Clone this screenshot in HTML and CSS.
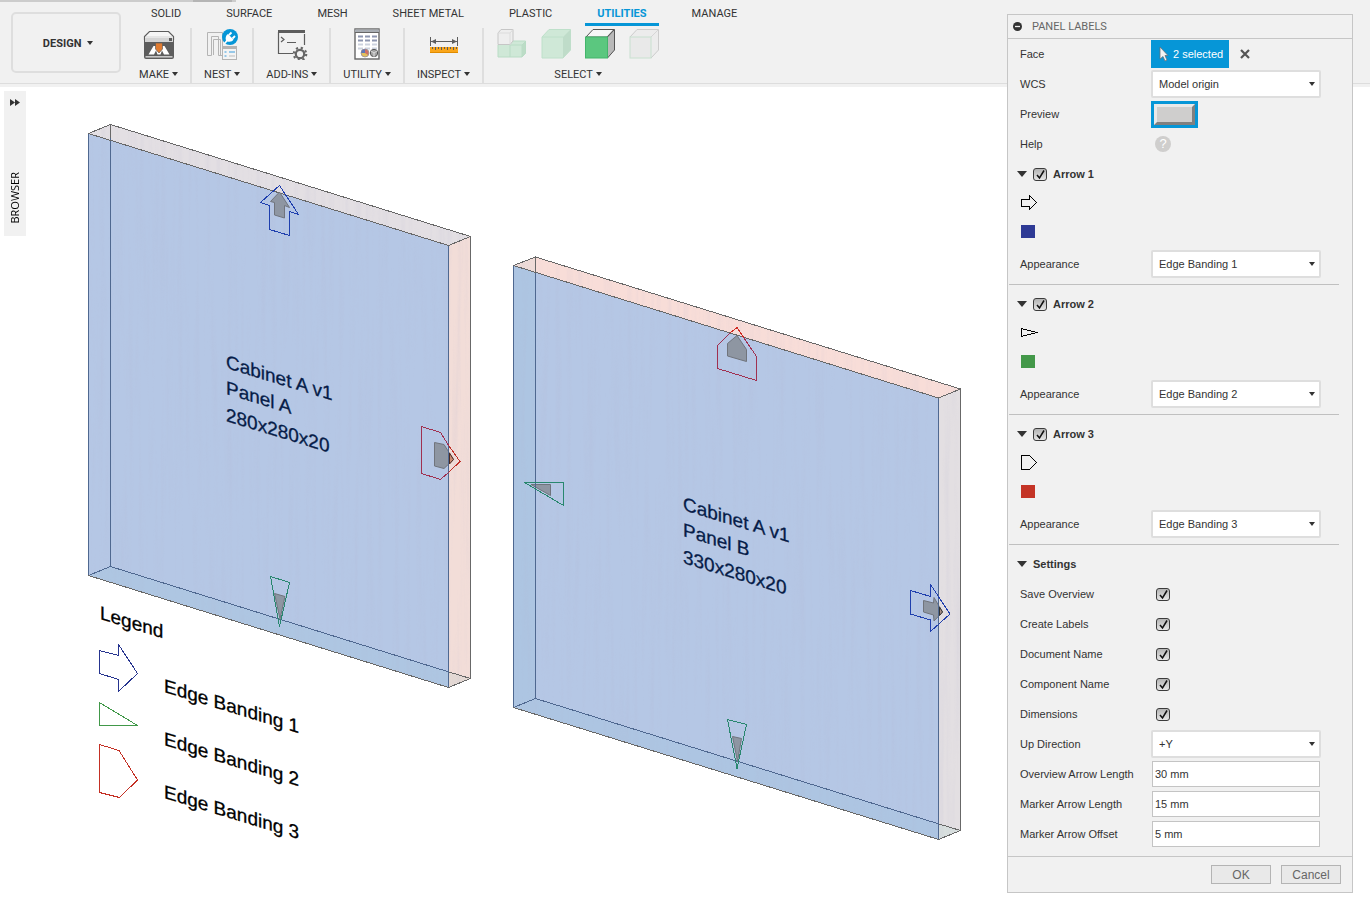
FILE: index.html
```html
<!DOCTYPE html>
<html lang="en">
<head>
<meta charset="utf-8">
<title>Panel Labels</title>
<link rel="stylesheet" href="styles.css">
</head>
<body>
<header class="toolbar">
  <div class="doc-strip"><span class="doc-strip-active"></span></div>
  <button class="workspace" type="button">DESIGN <span class="caret"></span></button>
  <div class="ribbon">
    <nav class="tabs">
      <a class="tab" href="#solid">SOLID</a>
      <a class="tab" href="#surface">SURFACE</a>
      <a class="tab" href="#mesh">MESH</a>
      <a class="tab" href="#sheet-metal">SHEET METAL</a>
      <a class="tab" href="#plastic">PLASTIC</a>
      <a class="tab tab-active" href="#utilities">UTILITIES</a>
      <a class="tab" href="#manage">MANAGE</a>
    </nav>
    <div class="groups">
      <div class="group">
        <svg class="icon" width="32" height="32" viewBox="0 0 32 32" aria-hidden="true">
          <path d="M1.500 12V8.500L6.500 3.500H25.500L30.500 8.500V12" fill="#f6f6f6" stroke="#5d5d5d" stroke-width="1.200"/>
          <path d="M3 9h26" stroke="#d6d6d6"/>
          <rect x="1" y="10" width="30" height="21" rx="2" fill="#5d5d5d"/>
          <rect x="2" y="10" width="28" height="4" fill="#d4d4d4"/><rect x="26" y="10" width="3" height="3" fill="#5d5d5d"/>
          <rect x="2.500" y="28" width="27" height="1.600" fill="#c8c8c8"/>
          <path d="M5.500 26.500L10.500 18H21.500L26.500 26.500H21L19 22.500 17.500 26.500H14.500L13 22.500 11 26.500Z" fill="#fff"/>
          <path d="M12.500 15H19.500V21L16 25 12.500 21Z" fill="#e07b30" stroke="#5d5d5d" stroke-width=".7"/>
        </svg>
        <button class="group-name" type="button">MAKE<span class="caret"></span></button>
      </div>
      <div class="group">
        <svg class="icon" width="32" height="32" viewBox="0 0 32 32" aria-hidden="true">
          <path d="M1.500 27.500V4.500H16.500V27.500H12.500V8.500H5.500V27.500ZM7.500 27V11.500H14.500V27" fill="none" stroke="#b4b4b4"/>
          <rect x="16.500" y="18.500" width="14" height="13" fill="#f4f4f4" stroke="#b4b4b4"/>
          <path d="M16 19.500h15" stroke="#b4b4b4" stroke-width="3"/>
          <path d="M18.500 24h2M18.500 28h2M23 24h6" stroke="#78b9e4" stroke-width="1.500"/><path d="M23 28h6" stroke="#bbb"/>
          <circle cx="24" cy="9" r="8" fill="#0696d7"/>
          <path d="M17.500 15.500L20 12.500C19 10 20 7 22 6L27.500 11.500C26.500 13.500 24 14 21.500 13.500L19 16Z" fill="#fff"/>
          <path d="M23 7L25.500 4.500M26.500 10.500L29 8" stroke="#fff" stroke-width="1.800"/>
        </svg>
        <button class="group-name" type="button">NEST<span class="caret"></span></button>
      </div>
      <div class="group">
        <svg class="icon" width="32" height="32" viewBox="0 0 32 32" aria-hidden="true">
          <path d="M2.500 4V25.500H17M28.500 6V17" fill="none" stroke="#5d5d5d" stroke-width="1.200"/>
          <path d="M2 3.500H29" stroke="#5d5d5d" stroke-width="3"/>
          <path d="M5 9L8 11.500 5 14M11 14.500H20" fill="none" stroke="#5d5d5d" stroke-width="1.200"/>
          <circle cx="24" cy="26" r="4.200" fill="none" stroke="#666" stroke-width="2.200"/>
          <circle cx="24" cy="26" r="6.200" fill="none" stroke="#666" stroke-width="2.200" stroke-dasharray="2.200 2.670"/>
        </svg>
        <button class="group-name" type="button">ADD-INS<span class="caret"></span></button>
      </div>
      <div class="group">
        <svg class="icon" width="32" height="32" viewBox="0 0 32 32" aria-hidden="true">
          <rect x="4" y="1" width="24" height="30" fill="#fff" stroke="#666" stroke-width="1.400"/>
          <path d="M4 3h24" stroke="#a8adb3" stroke-width="3"/><path d="M4 4.500h24" stroke="#666"/>
          <path d="M7 8.500h5M14 8.500h5M21 8.500h5M7 12.500h5M14 12.500h5M21 12.500h5" stroke="#8d96b0" stroke-width="2"/>
          <path d="M7 16.500h5M14 16.500h5M21 16.500h5M7 20.500h5M14 20.500h5M21 20.500h5" stroke="#cdd3df" stroke-width="2"/>
          <circle cx="14" cy="25" r="4" fill="#e3c05c"/><path d="M14 25V21A4 4 0 0 0 10 25Z" fill="#5e78b8"/><path d="M14 25V21A4 4 0 0 1 17 27Z" fill="#cf6f67"/><circle cx="14" cy="25" r="4" fill="none" stroke="#8b84a0" stroke-width=".7"/>
          <circle cx="23" cy="25" r="3.700" fill="#a5a5a5" stroke="#555"/><path d="M20 23l3 2 3-2M23 25v4" fill="none" stroke="#ddd"/>
        </svg>
        <button class="group-name" type="button">UTILITY<span class="caret"></span></button>
      </div>
      <div class="group">
        <svg class="icon" width="32" height="32" viewBox="0 0 32 32" aria-hidden="true">
          <path d="M2.500 9V18M29.500 9V18M3 13.500H29" fill="none" stroke="#5d5d5d"/>
          <path d="M3 13.500L8 11V16ZM29 13.500L24 11V16Z" fill="#5d5d5d"/>
          <rect x="2" y="19" width="28" height="6" fill="#faa61a"/><path d="M2 24.500H30" stroke="#e08c00"/>
          <path d="M4.500 19v2M7.500 19v3M10.500 19v2M13.500 19v3M16.500 19v2M19.500 19v3M22.500 19v2M25.500 19v3M28.500 19v2" stroke="#5d5d5d"/>
        </svg>
        <button class="group-name" type="button">INSPECT<span class="caret"></span></button>
      </div>
      <div class="group group-select">
        <div class="icon-row">
          <svg class="icon" width="32" height="32" viewBox="0 0 32 32" aria-hidden="true">
            <path d="M2 17L6 13H29.500V25L26 29H2Z" fill="#cfe8d7" stroke="#b9dcc5"/><path d="M26 29V17L29.500 13.500V25ZM14 17V29" fill="#bcdcc6" stroke="#b9dcc5"/><path d="M14 17H26" stroke="#b9dcc5"/>
            <path d="M2 5L5 1.500H17V13L14 16.500H2Z" fill="#eee" stroke="#c6c6c6"/><path d="M2 5H14V16.500M14 5L17 1.500" fill="none" stroke="#dcdcdc"/>
          </svg>
          <svg class="icon" width="32" height="32" viewBox="0 0 32 32" aria-hidden="true">
            <path d="M2 9L9 1.500H30.500V22L23 30H2Z" fill="#cfe8d7" stroke="#bee0ca"/><path d="M23 30V9L30.500 1.500V22Z" fill="#bfdcc9"/><path d="M2 9H23" stroke="#bee0ca"/>
          </svg>
          <svg class="icon" width="32" height="32" viewBox="0 0 32 32" aria-hidden="true">
            <path d="M2 9L9 1.500H30L23 9Z" fill="#f7f7f7" stroke="#555"/><path d="M23.500 9L30.500 1.500V22L23.500 30Z" fill="#b9b9b9" stroke="#555"/><rect x="1.500" y="9" width="22" height="21" fill="#5bc77f" stroke="#43b56b"/>
          </svg>
          <svg class="icon" width="32" height="32" viewBox="0 0 32 32" aria-hidden="true">
            <path d="M2 9L9 1.500H30.500V22L23 30" fill="#ececec" stroke="#ccc"/><path d="M23 9L30 2" stroke="#d6d6d6"/><rect x="2" y="9" width="21" height="21" fill="#e9e9e9" stroke="#c8e0cf"/>
          </svg>
        </div>
        <button class="group-name" type="button">SELECT<span class="caret"></span></button>
      </div>
    </div>
  </div>
</header>

<main class="workarea">
  <aside class="browser-tab">
    <svg width="10" height="7" viewBox="0 0 10 7" aria-hidden="true"><path d="M0 0L5 3.500 0 7ZM5 0L10 3.500 5 7Z" fill="#333"/></svg>
    <span class="browser-name">BROWSER</span>
  </aside>
  <svg class="scene" width="980" height="780" viewBox="26 87 980 780">
    <defs>
      <filter id="grain" x="0" y="0" width="100%" height="100%">
        <feTurbulence type="fractalNoise" baseFrequency="0.180 0.006" numOctaves="3" seed="4"/>
        <feColorMatrix values="0 0 0 0 .45  0 0 0 0 .45  0 0 0 0 .62  1.600 0 0 0 -.7"/>
        <feComposite in2="SourceGraphic" operator="in"/>
      </filter>
    </defs>

    <g class="edges">
      <path fill="#e3dfe3" d="M88.500 133.500L110.500 124.500 470.500 236.500 449 245.500Z"/>
      <path fill="#f2ddd8" d="M449 245.500L470.500 236.500V678.500L449 687.500Z"/>
      <path fill="#e4d9d4" d="M449 672L470.500 678.500 449 687.500Z"/>
      <path fill="#b5c7e5" d="M88.500 133.500L448.500 245.500V687.500L88.500 575.500Z"/>
      <path fill="#aec6e2" d="M88.500 575.500L110.500 566.500 448.500 671.500V687.500Z"/>
      <path fill="#f8ddd8" d="M513.500 265.500L535.500 257 960.500 389 938.500 398Z"/>
      <path fill="#eedbd7" d="M513.500 265.500L535.500 257V272Z"/>
      <path fill="#e3dfe2" d="M938.500 398L960.500 389V830.500L938.500 839.500Z"/>
      <path fill="#d8dfde" d="M938.500 824L960.500 830.500 938.500 839.500Z"/>
      <path fill="#b5c7e5" d="M513.500 265.500L938.500 398V839.500L513.500 707.500Z"/>
      <path fill="#adc5e2" d="M513.500 265.500L535.500 272.500V698.500L938.500 824V839.500L513.500 707.500Z"/>
    </g>
    <g filter="url(#grain)" opacity=".2">
      <path d="M88 133L110 124 471 236V678L449 687 88 575Z"/>
      <path d="M513 265L535 257 961 389V830L939 839 513 707Z"/>
    </g>
    <g class="edges" fill="none" stroke="#4f6890">
      <path d="M88.500 133.500V575.500M110.500 138V566.500L449 672M88.500 575.500L110.500 566.500M448.500 245.500V687.500"/>
      <path d="M513.500 265.500V707.500M535.500 272V698.500L939 824M513.500 707.500L535.500 698.500M938.500 398V839.500"/>
    </g>
    <g class="edges" fill="none" stroke="#686868">
      <path d="M88.500 133.500L110.500 124.500 470.500 236.500V678.500L448.500 687.500 88.500 575.500M88.500 133.500L448.500 245.500 470.500 236.500M110.500 124.500V138M449 672L470.500 678.500"/>
      <path d="M513.500 265.500L535.500 257 960.500 389V830.500L938.500 839.500 513.500 707.500M513.500 265.500L938.500 398 960.500 389M535.500 257V272M939 824L960.500 830.500"/>
    </g>

    <g fill="#8e96a2" stroke="#70747c">
      <path d="M279.500 192L270.500 201.500 274.500 202.500V215L284.500 218V205.500L289.500 207.500Z"/>
      <path d="M434.500 442.500L444 444.500 453.500 459.500 444 468.500 434.500 466Z"/>
      <path d="M274.500 593.500L285 596.500 280 619Z"/>
      <path d="M531 484.500H550.500V495.500Z"/>
      <path d="M737 335.500L727.500 343.500V356L746.500 361.500V349.500Z"/>
      <path d="M923.500 600.500L933.500 603 934 597.500 942.500 612 934 621 933.500 615 923.500 612Z"/>
      <path d="M732.500 736.500L741.500 738.500 737.500 761.500Z"/>
    </g>
    <path d="M449.500 453L453.500 459.500 449.500 464Z" fill="#c98a72" stroke="#4a2a22"/>
    <path d="M939.500 607L942.500 612 939.500 615.500Z" fill="#a88f84" stroke="#333"/>
    <path class="edges" d="M448.500 440V480M938.500 590V630M535.500 480V500" stroke="#4f6890"/>

    <g class="edges" fill="none">
      <path stroke="#1f3fae" d="M279.500 185.500L260.500 202.500 269.500 205.500V229.500L289.500 235.500V211.500L298.500 214.500Z"/>
      <path stroke="#a03050" d="M449 446L440.500 432.500 421.500 426.500V473.500L440.500 479.500 449 472"/>
      <path stroke="#c03028" d="M449 446L460 461.500 449 472"/>
      <path stroke="#28876e" d="M270.500 576.500L289.500 582.500 279.500 626.500Z"/>
      <path stroke="#28876e" d="M524.500 482.500H563.500V505.500Z"/>
      <path stroke="#a03050" d="M730 333L717.500 345.500V368.500L756.500 380.500V356.500L744 338"/>
      <path stroke="#d02c24" d="M730 333L737 327.500 744 338"/>
      <path stroke="#1f3fae" d="M910.500 590.500L930.500 596.500V584.500L950 614 930.500 631.500V620L910.500 614Z"/>
      <path stroke="#28876e" d="M727.500 719.500L746.500 724.500 737 768.500Z"/>
      <path stroke="#26348f" d="M99.500 650.500L118.500 655.500V644.500L137.500 673.500 118.500 691.500V679.500L99.500 673.500Z"/>
      <path stroke="#419849" d="M99.500 702.500L137.500 725.500H99.500Z"/>
      <path stroke="#c43024" d="M99.500 744.500L119 750.500 137.500 780 119.500 797.500 99.500 792.500Z"/>
    </g>

    <g class="engraving">
      <g transform="translate(226 368) skewY(17)"><text>Cabinet A v1</text><text y="26">Panel A</text><text y="53">280x280x20</text></g>
      <g transform="translate(683 510) skewY(17)"><text>Cabinet A v1</text><text y="26">Panel B</text><text y="53">330x280x20</text></g>
    </g>
    <g class="legend">
      <g transform="translate(100 619) skewY(17)"><text>Legend</text></g>
      <g transform="translate(164 692) skewY(17)"><text>Edge Banding 1</text><text y="53">Edge Banding 2</text><text y="106">Edge Banding 3</text></g>
    </g>
  </svg>
</main>

<form class="dialog">
  <h1 class="dialog-title">
    <svg width="9" height="9" viewBox="0 0 9 9" aria-hidden="true"><circle cx="4.500" cy="4.500" r="4.500" fill="#333"/><path d="M2 4.500h5" stroke="#f1f1f1" stroke-width="1.300"/></svg>
    PANEL LABELS
  </h1>
  <div class="dialog-body">
    <div class="row"><span>Face</span>
      <div class="pick">
        <button class="pick-button" type="button">
          <svg width="10" height="16" viewBox="0 0 10 16" aria-hidden="true"><path d="M1 1L9 9.500H6L8 14 6 15 4 10.500 1 13Z" fill="#f4f4f4" stroke="#66727c" stroke-width=".8"/></svg>
          2 selected</button>
        <button class="clear" type="button" aria-label="Clear selection"><svg width="10" height="10" viewBox="0 0 10 10"><path d="M1 1L9 9M9 1L1 9" stroke="#555" stroke-width="2.200"/></svg></button>
      </div>
    </div>
    <div class="row"><label for="wcs">WCS</label><span class="drop"><select id="wcs"><option>Model origin</option></select></span></div>
    <div class="row"><span>Preview</span><button class="preview" type="button" aria-label="Preview"></button></div>
    <div class="row"><span>Help</span><button class="help" type="button">?</button></div>

    <section class="section">
      <div class="section-head"><span class="fold"></span><input id="a1" type="checkbox" class="tick" checked><label for="a1">Arrow 1</label></div>
      <div class="shape"><svg width="18" height="16" viewBox="0 0 18 16" aria-hidden="true"><path d="M1.500 4.500H9.500V.5L16.500 7.500 9.500 14.500V11.500H1.500Z"/></svg></div>
      <div class="shape"><span class="swatch swatch-blue"></span></div>
      <div class="row"><label for="ap1">Appearance</label><span class="drop"><select id="ap1"><option>Edge Banding 1</option></select></span></div>
    </section>
    <section class="section">
      <div class="section-head"><span class="fold"></span><input id="a2" type="checkbox" class="tick" checked><label for="a2">Arrow 2</label></div>
      <div class="shape"><svg width="18" height="16" viewBox="0 0 18 16" aria-hidden="true"><path d="M1.500 3.500L16.500 7.500 1.500 11.500Z"/></svg></div>
      <div class="shape"><span class="swatch swatch-green"></span></div>
      <div class="row"><label for="ap2">Appearance</label><span class="drop"><select id="ap2"><option>Edge Banding 2</option></select></span></div>
    </section>
    <section class="section">
      <div class="section-head"><span class="fold"></span><input id="a3" type="checkbox" class="tick" checked><label for="a3">Arrow 3</label></div>
      <div class="shape"><svg width="18" height="16" viewBox="0 0 18 16" aria-hidden="true"><path d="M1.500 .5H9.500L16.500 7.500 9.500 14.500H1.500Z"/></svg></div>
      <div class="shape"><span class="swatch swatch-red"></span></div>
      <div class="row"><label for="ap3">Appearance</label><span class="drop"><select id="ap3"><option>Edge Banding 3</option></select></span></div>
    </section>
    <section class="section section-last">
      <div class="section-head"><span class="fold"></span><span>Settings</span></div>
      <div class="row"><label for="s1">Save Overview</label><input id="s1" type="checkbox" class="tick tick-cell" checked></div>
      <div class="row"><label for="s2">Create Labels</label><input id="s2" type="checkbox" class="tick tick-cell" checked></div>
      <div class="row"><label for="s3">Document Name</label><input id="s3" type="checkbox" class="tick tick-cell" checked></div>
      <div class="row"><label for="s4">Component Name</label><input id="s4" type="checkbox" class="tick tick-cell" checked></div>
      <div class="row"><label for="s5">Dimensions</label><input id="s5" type="checkbox" class="tick tick-cell" checked></div>
      <div class="row"><label for="up">Up Direction</label><span class="drop"><select id="up"><option>+Y</option></select></span></div>
      <div class="row"><label for="n1">Overview Arrow Length</label><input id="n1" class="field" type="text" value="30 mm"></div>
      <div class="row"><label for="n2">Marker Arrow Length</label><input id="n2" class="field" type="text" value="15 mm"></div>
      <div class="row"><label for="n3">Marker Arrow Offset</label><input id="n3" class="field" type="text" value="5 mm"></div>
    </section>
  </div>
  <footer class="dialog-actions">
    <button class="action" type="button">OK</button>
    <button class="action" type="button">Cancel</button>
  </footer>
</form>
</body>
</html>
```
FILE: styles.css
```css
* { box-sizing: border-box; }

body {
  margin: 0;
  min-height: 100vh;
  position: relative;
  background: #fff;
  color: #333;
  font: 11px/16px "Liberation Sans", Arial, sans-serif;
}

button, input, select { font: inherit; color: inherit; margin: 0; }
button { border: 0; padding: 0; background: none; cursor: pointer; }

/* Toolbar */
.toolbar {
  display: grid;
  grid-template-columns: 110px 1fr;
  grid-template-rows: 2px auto;
  column-gap: 4px;
  padding: 0 0 3px 11px;
  background: linear-gradient(#ddd, #ddd) 0 calc(100% - 3px) / 100% 1px no-repeat #f1f1f1;
  font-family: Roboto, "Liberation Sans", sans-serif;
}
.doc-strip {
  grid-column: 1 / -1;
  width: 236px;
  margin-left: -11px;
  padding: 0 4px 0 193px;
  background: #ccc;
}
.doc-strip-active { display: block; height: 2px; background: #b5b5b5; }
.workspace {
  height: 61px;
  margin-top: 10px;
  padding: 2px 0 0 4px;
  border: 2px solid #dedede;
  border-radius: 5px;
  font-weight: 700;
}
.caret {
  display: inline-block;
  margin: 0 0 2px 3px;
  border: 3px solid transparent;
  border-top: 4px solid #333;
  border-bottom: 0;
}
.tabs { display: flex; gap: 21px; padding: 4px 0 0 14px; }
.tab {
  padding: 0 12px 1px;
  border-bottom: 3px solid transparent;
  color: #333;
  text-decoration: none;
}
.tab-active { border-color: #0696d7; color: #0696d7; font-weight: 700; }
.groups { display: flex; padding: 2px 0 1px 2px; }
.group {
  display: flex;
  flex-direction: column;
  align-items: center;
  gap: 7px;
  padding: 0 12px;
  border-right: 2px solid #dedede;
}
.group:last-child { border-right: 0; }
.icon { display: block; }
.icon-row { display: flex; gap: 12px; }
.group-name { line-height: 16px; white-space: nowrap; }

/* Canvas */
.workarea { display: flex; align-items: flex-start; overflow: hidden; }
.browser-tab {
  flex: none;
  display: flex;
  flex-direction: column;
  align-items: center;
  gap: 66px;
  width: 22px;
  height: 145px;
  margin: 4px 0 0 4px;
  padding-top: 8px;
  background: #f1f1f1;
}
.browser-name {
  writing-mode: vertical-rl;
  transform: rotate(180deg);
  color: #000;
  font-family: "Open Sans", "Noto Sans", sans-serif;
}
.scene { flex: none; display: block; font-size: 19px; }
.edges { shape-rendering: crispEdges; }
.engraving { fill: #061c48; stroke: #061c48; stroke-width: .3; }
.legend { fill: #000; stroke: #000; stroke-width: .3; }

/* Floating dialog */
.dialog {
  position: absolute;
  top: 14px;
  right: 17px;
  width: 346px;
  border: 1px solid #c6c6c6;
  background: #f1f1f1;
}
.dialog-title {
  display: flex;
  align-items: center;
  gap: 10px;
  height: 24px;
  margin: 0;
  padding-left: 5px;
  border-bottom: 1px solid #c6c6c6;
  color: #666;
  font: 11px/16px Roboto, "Liberation Sans", sans-serif;
}
.dialog-body { padding: 0 13px 7px 1px; }
.row {
  display: grid;
  grid-template-columns: 131px 170px;
  align-items: center;
  height: 30px;
  padding-left: 11px;
}
.pick { display: flex; align-items: center; gap: 11px; }
.pick-button {
  display: flex;
  align-items: center;
  gap: 4px;
  height: 28px;
  padding: 0 6px 0 8px;
  background: #0696d7;
  color: #fff;
}
.clear { display: flex; }
.drop { position: relative; display: block; height: 28px; }
.drop::after {
  content: "";
  position: absolute;
  right: 6px;
  top: 12px;
  border: 3px solid transparent;
  border-top: 4px solid #333;
  border-bottom: 0;
  pointer-events: none;
}
.drop select {
  appearance: none;
  width: 100%;
  height: 28px;
  padding: 0 20px 0 6px;
  border: 2px solid #dedede;
  border-radius: 2px;
  background: #fff;
}
.preview {
  width: 41px;
  height: 21px;
  margin-left: 3px;
  border: 3px solid;
  border-color: #e9e9e9 #808080 #808080 #e9e9e9;
  outline: 3px solid #0696d7;
  background: #cfcecd;
}
.help {
  width: 16px;
  height: 16px;
  margin-left: 4px;
  border-radius: 50%;
  background: #cfcecd;
  color: #fff;
  font-size: 13px;
  line-height: 16px;
}
.section { padding-bottom: 5px; margin-bottom: 4px; border-bottom: 1px solid #c0c0c0; }
.section-last { padding: 0; margin: 0; border: 0; }
.section-head {
  display: flex;
  align-items: center;
  gap: 6px;
  height: 30px;
  padding-left: 8px;
  font-weight: 700;
}
.fold { border: 5px solid transparent; border-top: 6px solid #333; border-bottom: 0; }
.tick {
  appearance: none;
  width: 14px;
  height: 13px;
  border: 1px solid #3c3c3c;
  border-radius: 3px;
  background: linear-gradient(#b4b4b4, #e6e6e6);
}
.tick:checked {
  background:
    url("data:image/svg+xml,%3Csvg xmlns='http://www.w3.org/2000/svg' viewBox='0 0 11 11'%3E%3Cpath d='M2 6L4.500 9 9 1.500' fill='none' stroke='%23111' stroke-width='1.500'/%3E%3C/svg%3E") center / 11px 11px no-repeat,
    linear-gradient(#b4b4b4, #e6e6e6);
}
.tick-cell { margin-left: 5px; }
.shape { display: flex; align-items: center; height: 30px; padding: 0 0 3px 11px; }
.shape path { fill: none; stroke: #000; shape-rendering: crispEdges; }
.swatch { width: 14px; height: 13px; margin-left: 1px; }
.shape:has(.swatch) { padding-bottom: 5px; }
.swatch-blue { background: #2e3a95; }
.swatch-green { background: #439849; }
.swatch-red { background: #c43426; }
.field {
  width: 168px;
  height: 26px;
  margin-left: 1px;
  padding: 0 2px;
  border: 1px solid #c4c4c4;
  background: #fff;
}
.dialog-actions {
  display: flex;
  justify-content: flex-end;
  gap: 10px;
  padding: 8px 11px;
  border-top: 1px solid #c6c6c6;
}
.action {
  width: 60px;
  height: 19px;
  border: 1px solid #b4b4b4;
  background: #e9e9e9;
  color: #666;
  font-size: 12px;
}
```
